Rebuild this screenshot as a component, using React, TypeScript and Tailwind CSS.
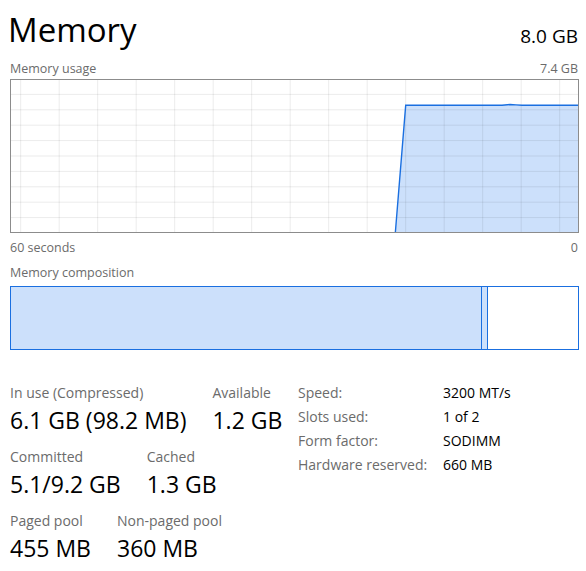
import React from 'react';

// Memory page of the performance view: usage chart, composition bar, stats.

const FONT = "font-['Open_Sans',sans-serif]";

function UsageChart() {
  const w = 569;
  const h = 154;
  const vx: number[] = [];
  for (let x = 10.7; x < w; x += 38.5) vx.push(x);
  const hy: number[] = [];
  for (let y = 15.4; y < h; y += 15.4) hy.push(y);
  const top = 26.3;
  const area = `385.3,${h} 395.7,${top} 492,${top} 500,${top - 0.8} 506,${top - 0.4} 512,${top} ${w},${top} ${w},${h}`;
  const line = `385.3,${h} 395.7,${top} 492,${top} 500,${top - 0.8} 506,${top - 0.4} 512,${top} ${w},${top}`;
  return (
    <svg width={w} height={h} viewBox={`0 0 ${w} ${h}`} className="block">
      <rect x={0} y={0} width={w} height={h} fill="#ffffff" />
      <polygon points={area} fill="#cce0fb" />
      {vx.map((x) => (
        <line key={`v${x}`} x1={x} y1={0} x2={x} y2={h} stroke="#000" strokeOpacity={0.08} strokeWidth={1} />
      ))}
      {hy.map((y) => (
        <line key={`h${y}`} x1={0} y1={y} x2={w} y2={y} stroke="#000" strokeOpacity={0.08} strokeWidth={1} />
      ))}
      <polyline points={line} fill="none" stroke="#1a6fe0" strokeWidth={1.4} />
      <rect x={0.5} y={0.5} width={w - 1} height={h - 1} fill="none" stroke="#8c8c8c" strokeWidth={1} />
    </svg>
  );
}

function Stat({ label, value }: { label: string; value: string }) {
  return (
    <div className="flex flex-col">
      <div className="text-[14px] leading-[24px] text-[#6b6b6b]">{label}</div>
      <div className="text-[23px] leading-[30px] text-black">{value}</div>
    </div>
  );
}

const specs: [string, string][] = [
  ['Speed:', '3200 MT/s'],
  ['Slots used:', '1 of 2'],
  ['Form factor:', 'SODIMM'],
  ['Hardware reserved:', '660 MB'],
];

export default function App() {
  return (
    <div className={`${FONT} w-[586px] h-[571px] bg-white px-[10px] overflow-hidden`}>
      <div className="flex items-end justify-between pt-[6px]">
        <div className="text-[33px] leading-[48px] text-black -ml-[2px] mb-[-1px]">Memory</div>
        <div className="text-[19px] leading-[26px] text-black mr-[-2px] mb-[4px]">8.0 GB</div>
      </div>
      <div className="flex justify-between text-[12.5px] leading-[16px] text-[#6b6b6b] mt-[8px] mb-[2px]">
        <span>Memory usage</span>
        <span className="mr-[-2px]">7.4 GB</span>
      </div>
      <UsageChart />
      <div className="flex justify-between text-[12.5px] leading-[16px] text-[#6b6b6b] mt-[7px]">
        <span>60 seconds</span>
        <span className="mr-[-2px]">0</span>
      </div>
      <div className="text-[12.5px] leading-[16px] text-[#6b6b6b] mt-[9px]">Memory composition</div>
      <div className="mt-[5px] flex h-[64px] w-[569px] border border-[#1a6fe0]">
        <div className="w-[471px] bg-[#cce0fb] border-r border-[#1a6fe0]" />
        <div className="w-[6px] bg-[#cce0fb] border-r border-[#1a6fe0]" />
        <div className="flex-1 bg-white" />
      </div>
      <div className="mt-[31px] flex">
        <div className="flex flex-col gap-[10px] w-[288px]">
          <div className="flex gap-[26px]">
            <Stat label="In use (Compressed)" value="6.1 GB (98.2 MB)" />
            <Stat label="Available" value="1.2 GB" />
          </div>
          <div className="flex gap-[26px]">
            <Stat label="Committed" value="5.1/9.2 GB" />
            <Stat label="Cached" value="1.3 GB" />
          </div>
          <div className="flex gap-[26px]">
            <Stat label="Paged pool" value="455 MB" />
            <Stat label="Non-paged pool" value="360 MB" />
          </div>
        </div>
        <div className="grid grid-cols-[145px_auto] auto-rows-[24px] text-[14px] leading-[24px] content-start">
          {specs.map(([k, v]) => (
            <React.Fragment key={k}>
              <div className="text-[#6b6b6b]">{k}</div>
              <div className="text-black">{v}</div>
            </React.Fragment>
          ))}
        </div>
      </div>
    </div>
  );
}
